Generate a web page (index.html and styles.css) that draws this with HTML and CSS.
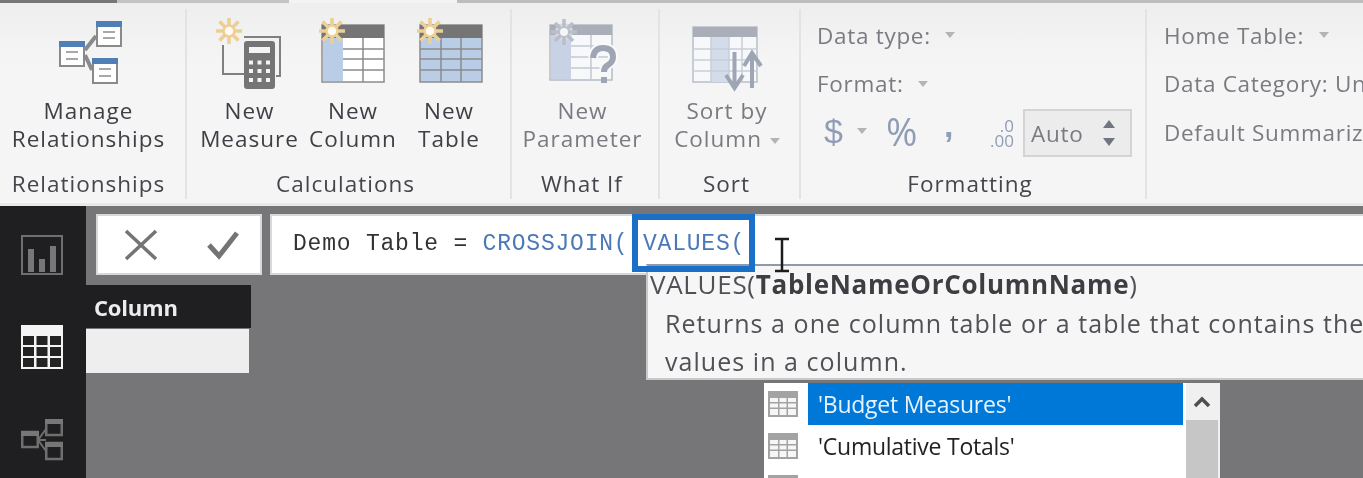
FILE: index.html
```html
<!DOCTYPE html>
<html lang="en">
<head>
<meta charset="utf-8">
<title>Power BI Desktop - Modeling</title>
<link rel="stylesheet" href="styles.css">
</head>
<body>
<svg class="defs" width="0" height="0" aria-hidden="true">
  <defs>
    <g id="sun" fill="none" stroke="#edcf96">
      <path d="M0-13V13M-13 0H13M-9.500-9.500 9.500 9.500M-9.500 9.500 9.500-9.500" stroke-width="3.600"/>
      <circle cx="0" cy="0" r="5.500" fill="#fffaf0" stroke-width="2.500"/>
    </g>
  </defs>
</svg>
<div class="app">
  <div class="tabstrip">
    <span class="tab-a"></span><span class="tab-b"></span><span class="tab-c"></span><span class="tab-d"></span>
  </div>
  <section class="ribbon">
    <div class="group g-rel">
      <div class="body center">
        <div class="btn w-rel">
          <svg class="ic" width="80" height="85" viewBox="48 12 80 85">
            <path d="M84 50 95 36M84 55 91 70" stroke="#8a8a8a" stroke-width="4" fill="none"/>
            <g fill="#fff" stroke="#8a8a8a" stroke-width="2">
              <rect x="96" y="22" width="24" height="24"/><rect x="59" y="42" width="24" height="24"/><rect x="92" y="59" width="24" height="24"/>
            </g>
            <g fill="#4f7fb5"><rect x="95" y="21" width="26" height="6"/><rect x="58" y="41" width="26" height="6"/><rect x="91" y="58" width="26" height="6"/></g>
            <path d="M102 32H114M102 38H114M65 52H77M65 59H77M98 69H110M98 76H110" stroke="#a8a8a8" stroke-width="2"/>
          </svg>
          <span>Manage<br>Relationships</span>
        </div>
      </div>
      <div class="label">Relationships</div>
    </div>
    <div class="group g-calc">
      <div class="body">
        <div class="btn w-meas">
          <svg class="ic" width="100" height="85" viewBox="199 12 100 85">
            <path d="M222 45V74H243M243 37H279V76H275" fill="none" stroke="#808080" stroke-width="2"/>
            <rect x="243" y="41" width="31" height="48" rx="3" fill="#757575"/>
            <rect x="248" y="47" width="21" height="6" fill="#f4f4f4"/>
            <path d="M248 62.500H269M248 71H269M248 80H269" stroke="#f4f4f4" stroke-width="4" stroke-dasharray="4 4.500"/>
            <use href="#sun" x="228" y="31"/>
          </svg>
          <span>New<br>Measure</span>
        </div>
        <div class="btn w-col">
          <svg class="ic" width="100" height="85" viewBox="303 12 100 85">
            <rect x="322" y="25" width="62" height="57" fill="#fff" stroke="#8c8c8c" stroke-width="1.500"/>
            <rect x="322" y="25" width="62" height="13" fill="#757575"/>
            <rect x="323" y="38" width="20" height="43" fill="#b9cde6"/>
            <path d="M343 49H384M343 59H384M343 70H384M363 38V82" stroke="#8c8c8c" stroke-width="1.500"/>
            <use href="#sun" x="332" y="31"/>
          </svg>
          <span>New<br>Column</span>
        </div>
        <div class="btn w-tab">
          <svg class="ic" width="100" height="85" viewBox="398 12 100 85">
            <rect x="419" y="25" width="62" height="57" fill="#b9cde6" stroke="#8c8c8c" stroke-width="1.500"/>
            <rect x="419" y="25" width="62" height="13" fill="#757575"/>
            <path d="M419 49H481M419 59H481M419 70H481M440 38V82M460 38V82" stroke="#8c8c8c" stroke-width="1.500"/>
            <use href="#sun" x="429" y="31"/>
          </svg>
          <span>New<br>Table</span>
        </div>
      </div>
      <div class="label">Calculations</div>
    </div>
    <div class="group g-what">
      <div class="body center">
        <div class="btn off w-par">
          <svg class="ic" width="100" height="85" viewBox="532 12 100 85">
            <rect x="549" y="25" width="62" height="55" fill="#f7f8fa" stroke="#b5bbc6" stroke-width="1.500"/>
            <rect x="549" y="25" width="62" height="10" fill="#a9aeb8"/>
            <rect x="550" y="35" width="20" height="44" fill="#c7d2e4"/>
            <path d="M570 46H611M570 57H611M570 68H611M590 35V80" stroke="#c3c8d2" stroke-width="1.500"/>
            <g transform="translate(563 32)"><circle r="9" fill="#d5d8de"/><path d="M0-13V13M-13 0H13M-9-9 9 9M-9 9 9-9" stroke="#b9bec8" stroke-width="3.500"/><circle r="4" fill="#f5f5f5"/></g>
            <path d="M592 58q1-10 10-10 10 0 10 9 0 5-5 8-4 2-4 7" fill="none" stroke="#fafafa" stroke-width="10"/>
            <path d="M592 58q1-10 10-10 10 0 10 9 0 5-5 8-4 2-4 7" fill="none" stroke="#9ea6b5" stroke-width="6"/>
            <rect x="600" y="77" width="6" height="6" fill="#9ea6b5"/>
          </svg>
          <span>New<br>Parameter</span>
        </div>
      </div>
      <div class="label">What If</div>
    </div>
    <div class="group g-sort">
      <div class="body center">
        <div class="btn off w-sort">
          <svg class="ic" width="100" height="85" viewBox="677 12 100 85">
            <rect x="693" y="27" width="64" height="55" fill="#f7f8fa" stroke="#b9bec9" stroke-width="1.500"/>
            <rect x="693" y="27" width="64" height="10" fill="#a9aeb8"/>
            <rect x="711" y="37" width="18" height="45" fill="#d3dcea"/>
            <path d="M693 49H757M693 60H757M693 71H757M711 37V82M729 37V82M742 37V82" stroke="#c9ced8" stroke-width="1.500"/>
            <path d="M734.500 52V84M726 75 734.500 88 743 75" fill="none" stroke="#9ea6b5" stroke-width="4"/>
            <path d="M752 88V56M744 66 752 53 761 66" fill="none" stroke="#9ea6b5" stroke-width="4"/>
          </svg>
          <span>Sort by<br>Column <i class="caret"></i></span>
        </div>
      </div>
      <div class="label">Sort</div>
    </div>
    <div class="group g-fmt">
      <div class="body stack">
        <div class="row off">Data type: <i class="caret wide"></i></div>
        <div class="row off">Format: <i class="caret wide"></i></div>
        <div class="row off syms">
          <span class="sym s-dollar">$</span><i class="caret"></i>
          <span class="sym s-pct">%</span>
          <span class="sym s-comma">,</span>
          <span class="decimals"><b>.0</b><b>.00</b></span>
          <div class="spin">
            <span>Auto</span>
            <svg width="14" height="28" viewBox="0 0 14 28"><path d="M7 1 13 9H1ZM1 19H13L7 27Z" fill="#6f7682"/></svg>
          </div>
        </div>
      </div>
      <div class="label">Formatting</div>
    </div>
    <div class="group g-prop">
      <div class="body stack">
        <div class="row off">Home Table: <i class="caret wide"></i></div>
        <div class="row off">Data Category: Uncategorized</div>
        <div class="row off">Default Summarization: Don't summarize</div>
      </div>
      <div class="label">Properties</div>
    </div>
  </section>
  <main class="main">
    <nav class="rail">
      <svg width="42" height="40" viewBox="0 0 42 40">
        <rect x="1" y="1" width="40" height="38" fill="none" stroke="#6f6f6f" stroke-width="2"/>
        <path d="M7 14h6v23H7ZM18 24h6v13h-6ZM29 11h6v26h-6Z" fill="#777"/>
      </svg>
      <svg width="42" height="44" viewBox="0 0 42 44">
        <rect x="0" y="0" width="42" height="44" fill="#f4f4f4"/>
        <g fill="#232323"><rect x="2" y="11" width="11" height="9"/><rect x="15.500" y="11" width="11" height="9"/><rect x="29" y="11" width="11" height="9"/><rect x="2" y="22" width="11" height="9"/><rect x="15.500" y="22" width="11" height="9"/><rect x="29" y="22" width="11" height="9"/><rect x="2" y="33" width="11" height="9"/><rect x="15.500" y="33" width="11" height="9"/><rect x="29" y="33" width="11" height="9"/></g>
      </svg>
      <svg width="42" height="42" viewBox="0 0 42 42">
        <path d="M17 21 25 10M17 21H25M17 21 25 32" stroke="#6f6f6f" stroke-width="2" fill="none"/>
        <g fill="none" stroke="#6f6f6f" stroke-width="2.500"><rect x="1.250" y="13" width="15.500" height="15"/><rect x="25.250" y="1" width="15.500" height="15"/><rect x="25.250" y="24" width="15.500" height="16"/></g>
        <path d="M0 12h18v5H0ZM24 0h18v5H24ZM24 23h18v5H24Z" fill="#777"/>
      </svg>
    </nav>
    <div class="work">
      <div class="fbar">
        <div class="fbtns">
          <svg width="36" height="32" viewBox="0 0 36 32"><path d="M3 2 33 30M33 2 3 30" stroke="#747474" stroke-width="3.500" fill="none"/></svg>
          <svg width="34" height="30" viewBox="0 0 34 30"><path d="M3 15 13 26 31 3" stroke="#747474" stroke-width="5" fill="none"/></svg>
        </div>
        <div class="finput">
          <span>Demo Table = </span><span class="fn">CROSSJOIN( VALUES(</span>
        </div>
      </div>
      <div class="grid">
        <div class="ghead">Column</div>
        <div class="gcell"></div>
      </div>
    </div>
  </main>

  <div class="tip">
    <div class="sig">VALUES(<b>TableNameOrColumnName</b>)</div>
    <div class="desc">Returns a one column table or a table that contains the distinct<br>values in a column.</div>
  </div>
  <div class="focus"></div>
  <svg class="ibeam" width="18" height="36" viewBox="0 0 18 36"><path d="M2 2H16M9 2V34M2 34H16" stroke="#1d1d1d" stroke-width="2.500" fill="none"/></svg>
  <div class="list">
    <div class="items">
      <div class="item sel">
        <span class="gl"><svg width="30" height="26" viewBox="0 0 30 26"><rect width="30" height="26" fill="#a3a3a3"/><path d="M2 7h8v4H2ZM11.500 7h7v4h-7ZM20 7h8v4h-8ZM2 12.500h8v4H2ZM11.500 12.500h7v4h-7ZM20 12.500h8v4h-8ZM2 18h8v6H2ZM11.500 18h7v6h-7ZM20 18h8v6h-8Z" fill="#f6f6f6"/></svg></span>
        <span class="nm">'Budget Measures'</span>
      </div>
      <div class="item">
        <span class="gl"><svg width="30" height="26" viewBox="0 0 30 26"><rect width="30" height="26" fill="#a3a3a3"/><path d="M2 7h8v4H2ZM11.500 7h7v4h-7ZM20 7h8v4h-8ZM2 12.500h8v4H2ZM11.500 12.500h7v4h-7ZM20 12.500h8v4h-8ZM2 18h8v6H2ZM11.500 18h7v6h-7ZM20 18h8v6h-8Z" fill="#f6f6f6"/></svg></span>
        <span class="nm">'Cumulative Totals'</span>
      </div>
      <div class="item">
        <span class="gl"><svg width="30" height="26" viewBox="0 0 30 26"><rect width="30" height="26" fill="#a3a3a3"/></svg></span>
        <span class="nm">'Customers'</span>
      </div>
    </div>
    <div class="sbar">
      <div class="sup"><svg width="18" height="12" viewBox="0 0 18 12"><path d="M2 10 9 3 16 10" stroke="#4f4f4f" stroke-width="3.500" fill="none"/></svg></div>
      <div class="thumb"></div>
    </div>
  </div>
</div>
</body>
</html>
```

FILE: styles.css
```css
* { box-sizing: border-box; }
html, body { margin: 0; height: 100%; overflow: hidden; }
.defs { position: absolute; }
.app {
  position: relative;
  width: 1363px;
  height: 478px;
  overflow: hidden;
  display: flex;
  flex-direction: column;
  font-family: "Open Sans", "Liberation Sans", sans-serif;
  color: #3f3f45;
  background: #767577;
  filter: blur(0.45px);
}

/* tab strip */
.tabstrip { display: flex; height: 3px; flex: none; }
.tab-a { width: 117px; background: #77777a; }
.tab-b { width: 172px; background: #c3c3c5; }
.tab-c { width: 168px; background: #f3f3f4; }
.tab-d { flex: 1; background: #bdbdbf; }

/* ribbon */
.ribbon {
  display: flex;
  height: 203px;
  flex: none;
  background: linear-gradient(#eeeeef, #f5f5f6 60px);
  border-bottom: 3px solid #e9e9ea;
  overflow: hidden;
}
.group { display: flex; flex-direction: column; flex: none; position: relative; border-right: 2px solid #e3e3e5; margin-top: 6px; margin-bottom: 4px; }
.g-rel { width: 187px; }
.g-calc { width: 325px; }
.g-what { width: 148px; }
.g-sort { width: 141px; }
.g-fmt { width: 346px; }
.g-prop { width: 560px; border-right: 0; }
.body { height: 158px; flex: none; display: flex; padding-top: 3px; }
.center { justify-content: center; padding-right: 5px; }
.g-calc .body { padding-left: 12px; }
.label { text-align: center; font-size: 22.500px; line-height: 28px; letter-spacing: 1px; color: #45454b; margin-top: 3px; padding-right: 6px; }
.g-rel .body { padding-right: 8px; }
.g-rel .label { padding-right: 8px; }

.btn { display: flex; flex-direction: column; align-items: center; text-align: center; font-size: 22.500px; line-height: 28px; letter-spacing: 1px; white-space: nowrap; }
.btn span { display: block; }
.ic { display: block; flex: none; }
.w-rel { width: 176px; }
.w-meas { width: 101px; }
.w-col { width: 106px; }
.w-tab { width: 86px; }
.off { color: #7a7a81; }
.caret { display: inline-block; width: 0; height: 0; border-left: 5px solid transparent; border-right: 5px solid transparent; border-top: 6px solid #b4b4b8; vertical-align: middle; margin-left: 1px; }
.caret.wide { margin-left: 8px; }

.stack { flex-direction: column; padding-top: 0; }
.g-fmt .stack { padding-left: 16px; }
.g-prop .stack { padding-left: 17px; }
.row { height: 48.500px; display: flex; align-items: center; font-size: 22.500px; letter-spacing: 0.7px; white-space: pre; padding-top: 3px; }
.row:first-child { height: 49px; }
.syms { position: relative; padding-top: 1px; }
.sym { color: #8f9db5; font-family: "Liberation Sans", sans-serif; }
.s-dollar { font-size: 34px; width: 31px; margin-left: 7px; }
.syms .caret { margin-left: 2px; }
.s-pct { font-size: 38px; margin-left: 19px; width: 58px; font-family: "Open Sans", sans-serif; }
.s-comma { font-size: 34px; font-weight: 700; margin-left: 0; width: 36px; margin-top: -12px; }
.decimals { display: flex; flex-direction: column; align-items: flex-end; line-height: 15px; color: #8f9db5; width: 34px; margin-right: 9px; margin-top: 3px; }
.decimals b { font-weight: 400; font-size: 17px; letter-spacing: 0; }
.spin { display: flex; align-items: center; justify-content: space-between; width: 109px; height: 48px; margin-top: 4px; padding: 0 14px 0 6px; background: #ececed; border: 2px solid #d4d4d6; color: #7a7a81; }

/* main area */
.main { flex: 1; display: flex; min-height: 0; }
.rail { width: 86px; flex: none; background: #1f1f21; display: flex; flex-direction: column; align-items: center; gap: 50px; padding-top: 29px; padding-right: 3px; }
.rail svg { flex: none; display: block; }
.work { flex: 1; padding-top: 8px; }
.fbar { display: flex; gap: 8px; padding-left: 10px; height: 61px; }
.fbtns { width: 166px; flex: none; background: #fff; border: 2px solid #d8d8d9; display: flex; align-items: center; justify-content: space-between; padding: 0 20px 0 25px; }
.finput { flex: 1; background: #fff; border: 2px solid #d8d8d9; border-right: 0; padding: 0 0 1px 21px; display: flex; align-items: center; font-family: "Liberation Mono", monospace; font-size: 23px; letter-spacing: 0.78px; white-space: pre; color: #333; }
.fn { color: #4a78b8; }
.grid { width: 165px; margin-top: 10px; }
.ghead { height: 43px; background: #1f1f21; color: #ececec; font-weight: 700; font-size: 22px; letter-spacing: -0.2px; padding: 6px 0 0 8px; line-height: 32px; margin-bottom: 1px; }
.gcell { width: 163px; height: 44px; background: #eeeeef; }

/* overlays */
.focus { position: absolute; left: 632px; top: 214px; width: 123px; height: 58px; border: 6px solid #1a70c6; }
.ibeam { position: absolute; left: 773px; top: 237px; }
.tip { position: absolute; left: 646px; top: 264px; width: 800px; height: 116px; background: #f6f6f7; border-top: 2px solid #8d99ad; border-left: 2px solid #c9c9ca; border-bottom: 2px solid #c9c9ca; white-space: nowrap; color: #505056; padding-left: 2px; }
.sig { line-height: 36px; height: 38px; font-size: 26px; letter-spacing: 0.7px; }
.sig b { font-weight: 700; color: #3d3d42; }
.desc { padding-left: 15px; line-height: 38px; font-size: 25px; letter-spacing: 1.05px; }
.list { position: absolute; left: 764px; top: 383px; width: 456px; height: 100px; background: #fff; display: flex; }
.items { width: 419px; flex: none; }
.item { display: flex; height: 42px; align-items: center; font-size: 23px; letter-spacing: -0.25px; color: #222; }
.gl { width: 44px; flex: none; display: flex; justify-content: center; padding-right: 6px; }
.gl svg { display: block; }
.nm { flex: 1; padding-left: 10px; line-height: 42px; height: 42px; white-space: nowrap; }
.sel .nm { background: #0078d7; color: #e8f3fd; }
.sbar { flex: 1; margin-left: 3px; background: #f0f0f0; display: flex; flex-direction: column; }
.sup { height: 37px; display: flex; align-items: center; justify-content: center; padding-right: 2px; }
.thumb { flex: 1; width: 32px; background: #c6c6c6; }
```
